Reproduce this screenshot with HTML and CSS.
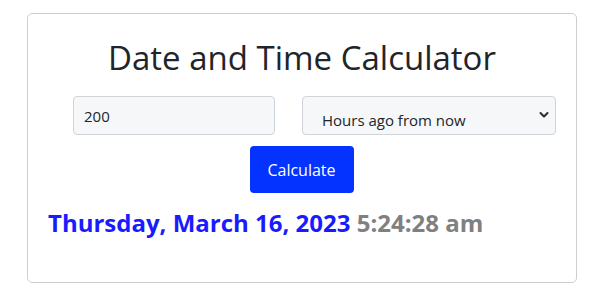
FILE: index.html
```html
<!DOCTYPE html>
<html>
<head>
<meta charset="utf-8">
<link rel="stylesheet" href="styles.css">
</head>
<body>
<div class="page">
  <div class="card">
    <h1 class="title">Date and Time Calculator</h1>
    <div class="row">
      <input class="field num" type="text" value="200">
      <div class="field sel">
        <span>Hours ago from now</span>
        <svg class="chev" width="10" height="8" viewBox="0 0 10 8"><path d="M1.5 2l3.5 3.5 3.5-3.5" fill="none" stroke="#2b2b2b" stroke-width="2" stroke-linecap="round" stroke-linejoin="round"/></svg>
      </div>
    </div>
    <div class="actions"><button class="btn">Calculate</button></div>
    <div class="result"><span class="date">Thursday, March 16, 2023</span> <span class="time">5:24:28 am</span></div>
  </div>
</div>
</body>
</html>
```
FILE: styles.css
```css
* { box-sizing: border-box; }
body { margin: 0; background: #fff; font-family: "Open Sans", "Noto Sans", sans-serif; color: #212529; }
.page { padding: 13px 27px 15px 27px; }
.card { border: 1px solid #cfcfcf; border-radius: 5px; height: 270px; padding: 0; }
.title { margin: 22px 0 0 0; text-align: center; font-weight: 400; font-size: 33px; line-height: 44px; color: #212529; }
.row { display: flex; margin: 16px 0 0 45px; gap: 27px; }
.field { height: 39px; border: 1px solid #ced4da; border-radius: 4px; background: #f6f7f9; font-family: inherit; font-size: 15px; color: #212529; }
.num { width: 202px; padding: 0 10px; outline: none; }
.sel { width: 254px; display: flex; align-items: center; justify-content: space-between; padding: 8px 6px 0 19px; }
.chev { margin-top: -9px; }
.actions { display: flex; justify-content: center; margin-top: 11px; padding-right: 1px; }
.btn { width: 104px; height: 47px; background: #0433ff; color: #fff; border: none; border-radius: 4px; font-family: inherit; font-size: 16px; }
.result { margin: 14px 0 0 20px; font-weight: 700; font-size: 24px; line-height: 32px; }
.date { color: #1a1aff; }
.time { color: #808080; }
```
